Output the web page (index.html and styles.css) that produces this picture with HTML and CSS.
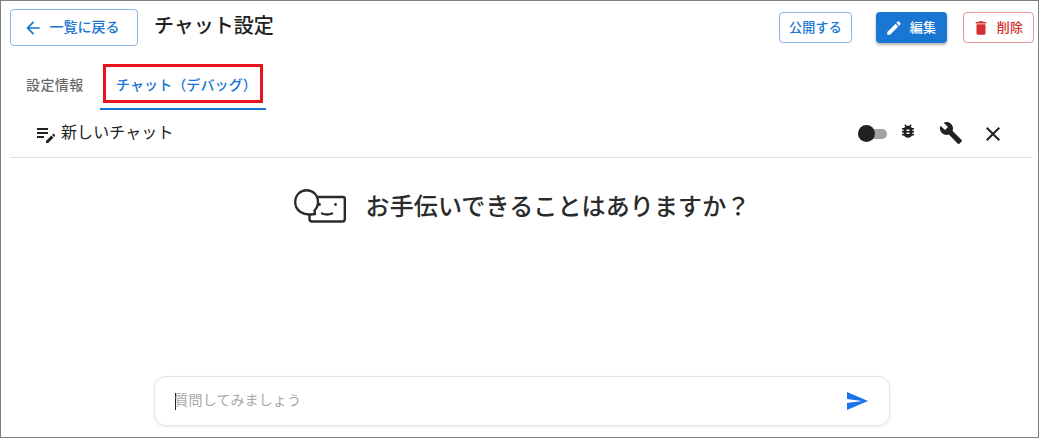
FILE: index.html
```html
<!DOCTYPE html>
<html lang="ja">
<head>
	<meta charset="UTF-8">
	<meta name="viewport" content="width=device-width, initial-scale=1.0">
	<title>チャット設定</title>
	<link rel="stylesheet" href="styles.css">
</head>
<body>
	<div class="page">
		<header class="top">
			<a class="btn btn-back">
				<svg class="icon-back" viewBox="0 0 24 24"><path d="M20 11H7.83l5.59-5.59L12 4l-8 8 8 8 1.41-1.41L7.83 13H20v-2z"/></svg>
				<span>一覧に戻る</span>
			</a>
			<h1 class="title">チャット設定</h1>
			<div class="actions">
				<a class="btn btn-publish">公開する</a>
				<a class="btn btn-edit">
					<svg viewBox="0 0 24 24"><path d="M3 17.25V21h3.75L17.81 9.94l-3.75-3.75L3 17.25zM20.71 7.04c.39-.39.39-1.02 0-1.41l-2.34-2.34c-.39-.39-1.02-.39-1.41 0l-1.83 1.83 3.75 3.75 1.83-1.83z"/></svg>
					<span>編集</span>
				</a>
				<a class="btn btn-delete">
					<svg viewBox="0 0 24 24"><path d="M6 19c0 1.1.9 2 2 2h8c1.1 0 2-.9 2-2V7H6v12zM19 4h-3.5l-1-1h-5l-1 1H5v2h14V4z"/></svg>
					<span>削除</span>
				</a>
			</div>
		</header>

		<nav class="tabs">
			<div class="tab">設定情報</div>
			<div class="tab tab-active">チャット（デバッグ）<span class="highlight"></span></div>
		</nav>

		<div class="toolbar">
			<div class="new-chat">
				<svg viewBox="0 0 24 24"><path d="M3 10h11v2H3zm0-2h11V6H3zm0 8h7v-2H3zm15.01-3.13.71-.71c.39-.39 1.02-.39 1.41 0l.71.71c.39.39.39 1.02 0 1.41l-.71.71-2.12-2.12zm-.71.71-5.3 5.3V21h2.12l5.3-5.3-2.12-2.12z"/></svg>
				<span>新しいチャット</span>
			</div>
			<div class="tools">
				<div class="switch"><span class="thumb"></span></div>
				<svg class="icon-bug" viewBox="0 0 24 24"><path d="M20 8h-2.81c-.45-.78-1.07-1.45-1.82-1.96L17 4.41 15.59 3l-2.17 2.17C12.96 5.06 12.49 5 12 5c-.49 0-.96.06-1.41.17L8.41 3 7 4.41l1.62 1.63C7.88 6.55 7.26 7.22 6.81 8H4v2h2.09c-.05.33-.09.66-.09 1v1H4v2h2v1c0 .34.04.67.09 1H4v2h2.81c1.04 1.79 2.97 3 5.19 3s4.15-1.21 5.19-3H20v-2h-2.09c.05-.33.09-.66.09-1v-1h2v-2h-2v-1c0-.34-.04-.67-.09-1H20V8zm-6 8h-4v-2h4v2zm0-4h-4v-2h4v2z"/></svg>
				<svg class="icon-wrench" viewBox="0 0 24 24"><path d="M22.7 19l-9.1-9.1c.9-2.3.4-5-1.5-6.9-2-2-5-2.4-7.4-1.3L9 6 6 9 1.6 4.7C.4 7.1.9 10.1 2.9 12.1c1.9 1.9 4.6 2.4 6.9 1.5l9.1 9.1c.4.4 1 .4 1.4 0l2.3-2.3c.5-.4.5-1.1.1-1.4z"/></svg>
				<svg class="icon-close" viewBox="0 0 24 24"><path d="M19 6.41 17.59 5 12 10.59 6.41 5 5 6.41 10.59 12 5 17.59 6.41 19 12 13.41 17.59 19 19 17.59 13.41 12z"/></svg>
			</div>
		</div>

		<main class="chat">
			<div class="welcome">
				<svg class="icon-chat" viewBox="0 0 52 36">
					<path d="M17 25.5 C10 26 1.2 22.5 1.2 13 C1.2 6 6.5 1.2 12.5 1.2 C19 1.2 24 6 24 13 C24 16.5 22.5 19.5 20.5 21.5 L21 25 L17 25.5 Z"/>
					<path d="M24.5 8 H49 Q50.8 8 50.8 10 V30 Q50.8 32.5 48.5 32.5 H18 Q15.5 32.5 15.5 30 V26"/>
					<circle class="eye" cx="25.5" cy="15.5" r="1.4"/>
					<circle class="eye" cx="41.5" cy="15.5" r="1.4"/>
					<path d="M28 24.5 Q33 26.5 38 24.5"/>
				</svg>
				<p class="welcome-text">お手伝いできることはありますか？</p>
			</div>
			<div class="input-box">
				<div class="input-text"><span class="caret"></span>質問してみましょう</div>
				<svg class="icon-send" viewBox="0 0 24 24"><path d="M2.01 21 23 12 2.01 3 2 10l15 2-15 2z"/></svg>
			</div>
		</main>
	</div>
</body>
</html>
```

FILE: styles.css
```css
* {
	margin: 0;
	padding: 0;
	box-sizing: border-box;
}

body {
	background-color: white;
	font-family: "Roboto", "Noto Sans CJK JP", sans-serif;
	color: #212121;
}

.page {
	height: 438px;
	border: 1px solid #7f7f7f;
	display: flex;
	flex-direction: column;
}

svg {
	display: block;
	fill: currentColor;
	flex-shrink: 0;
}

/* header */
.top {
	display: flex;
	align-items: flex-start;
	padding: 8px 4px 0 9px;
	height: 55px;
}

.btn {
	display: flex;
	align-items: center;
	justify-content: center;
	border-radius: 4px;
	font-size: 13px;
	font-weight: 500;
	letter-spacing: 0.2px;
}

.btn span, .btn-publish {
	padding-bottom: 3px;
}

.btn-back {
	width: 128px;
	height: 37px;
	gap: 7px;
	padding-right: 6px;
	color: #1976d2;
	border: 1px solid rgba(25, 118, 210, 0.5);
}

.btn-back span {
	font-size: 14px;
	letter-spacing: 0;
}

.icon-back {
	width: 20px;
	height: 20px;
}

.title {
	font-size: 20px;
	font-weight: 500;
	line-height: 35px;
	margin-left: 16px;
}

.actions {
	margin-left: auto;
	margin-top: 3px;
	display: flex;
}

.btn-publish {
	width: 73px;
	height: 31px;
	color: #1976d2;
	border: 1px solid rgba(25, 118, 210, 0.5);
	margin-right: 24px;
}

.btn-edit {
	width: 71px;
	height: 31px;
	gap: 7px;
	padding-right: 2px;
	color: white;
	background-color: #1976d2;
	box-shadow: 0px 2px 3px rgba(0, 0, 0, 0.3);
	margin-right: 16px;
}

.btn-edit svg, .btn-delete svg {
	width: 18px;
	height: 18px;
}

.btn-delete {
	width: 71px;
	height: 31px;
	gap: 7px;
	padding-right: 2px;
	color: #d32f2f;
	border: 1px solid rgba(211, 47, 47, 0.5);
}

/* tabs */
.tabs {
	display: flex;
	height: 54px;
	padding-left: 9px;
	font-size: 14px;
	font-weight: 500;
	letter-spacing: 0.4px;
}

.tab {
	position: relative;
	color: rgba(0, 0, 0, 0.6);
	padding: 1px 16px 0;
	line-height: 56px;
	width: 90px;
	white-space: nowrap;
}

.tab-active {
	width: 166px;
	color: #1976d2;
	letter-spacing: 0.1px;
	border-bottom: 2px solid #1976d2;
}

.highlight {
	position: absolute;
	left: 3px;
	top: 8px;
	width: 160px;
	height: 39px;
	border: 3px solid #e8141c;
}

/* toolbar */
.toolbar {
	display: flex;
	align-items: center;
	justify-content: space-between;
	height: 48px;
	margin: 0 5px 0 9px;
	padding: 0 28px 0 24px;
	border-bottom: 1px solid #e0e0e0;
}

.new-chat {
	display: flex;
	align-items: center;
	gap: 3px;
	font-size: 16px;
	letter-spacing: 0.1px;
	margin-top: -5px;
}

.new-chat svg {
	width: 24px;
	height: 24px;
	margin-top: 5px;
}

.tools {
	display: flex;
	align-items: center;
}

.switch {
	position: relative;
	width: 29px;
	height: 10px;
	border-radius: 5px;
	background-color: #a3a3a3;
}

.thumb {
	position: absolute;
	left: 0;
	top: -4px;
	width: 17px;
	height: 17px;
	border-radius: 50%;
	background-color: #212121;
}

.icon-bug {
	width: 18px;
	height: 18px;
	margin: -6px 0 0 12px;
}

.icon-wrench {
	width: 24px;
	height: 24px;
	margin: -2px 0 0 22px;
}

.icon-close {
	width: 24px;
	height: 24px;
	margin-left: 18px;
}

/* chat area */
.chat {
	flex: 1;
	display: flex;
	flex-direction: column;
	align-items: center;
	justify-content: space-between;
	padding: 30px 0 11px 4px;
}

.welcome {
	display: flex;
	align-items: center;
	gap: 20px;
	margin-left: 1px;
}

.icon-chat {
	width: 52px;
	height: 36px;
	fill: none;
	stroke: #2b2b2b;
	stroke-width: 2.4;
	stroke-linejoin: round;
	stroke-linecap: round;
}

.icon-chat .eye {
	fill: #2b2b2b;
	stroke: none;
}

.welcome-text {
	font-size: 24px;
	font-weight: 500;
	line-height: 36px;
	letter-spacing: 0.13px;
	padding-top: 1px;
	color: #2b2b2b;
}

.input-box {
	width: 736px;
	height: 50px;
	display: flex;
	align-items: center;
	justify-content: space-between;
	padding: 0 20px;
	border: 1px solid #e4e4e4;
	border-radius: 12px;
	box-shadow: 0px 1px 3px rgba(0, 0, 0, 0.08);
}

.input-text {
	display: flex;
	align-items: center;
	font-size: 14px;
	letter-spacing: 0.1px;
	color: #a8a8a8;
	padding-bottom: 5px;
}

.caret {
	width: 1px;
	height: 17px;
	background-color: #212121;
	margin-right: -1px;
	margin-top: 5px;
}

.icon-send {
	width: 24px;
	height: 24px;
	color: #1a73e8;
}
```
